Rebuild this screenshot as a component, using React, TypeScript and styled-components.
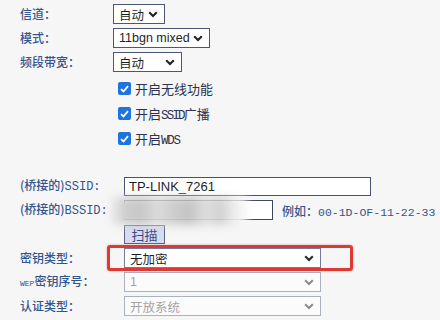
import React from 'react';
import styled, { createGlobalStyle } from 'styled-components';

const GlobalStyle = createGlobalStyle`
  html, body {
    margin: 0;
    padding: 0;
    background: #f6f6f6;
  }
  body {
    width: 440px;
    height: 320px;
    overflow: hidden;
    font-family: "Noto Sans CJK SC", sans-serif;
  }
`;

const Page = styled.div`
  display: flex;
  flex-direction: column;
  padding: 2px 0 0 20px;
`;

const Section = styled.div<{ top?: number }>`
  display: flex;
  flex-direction: column;
  margin-top: ${props => props.top || 0}px;
`;

const Row = styled.div<{ height?: number; indent?: number }>`
  display: flex;
  align-items: center;
  height: ${props => props.height || 24}px;
  padding-left: ${props => props.indent || 0}px;
`;

const Label = styled.div<{ width: number }>`
  flex: none;
  width: ${props => props.width}px;
  font-size: 12px;
  font-weight: 500;
  line-height: 16px;
  color: #32558f;
  white-space: nowrap;
`;

const Latin = styled.span<{ size?: number; squeeze?: number }>`
  font-family: "Liberation Mono", monospace;
  font-size: ${props => props.size || 12}px;
  letter-spacing: ${props => -(props.squeeze || 0)}px;
`;

const Field = styled.div`
  position: relative;
  display: flex;
  align-items: center;
`;

const Select = styled.div<{ width: number; disabled?: boolean; tone?: 'dark' | 'soft' }>`
  box-sizing: border-box;
  display: flex;
  align-items: center;
  justify-content: space-between;
  width: ${props => props.width}px;
  height: 20px;
  padding: 0 6px 0 5px;
  background: ${props => (props.disabled ? '#fbfbfb' : '#ffffff')};
  border: 1px solid
    ${props =>
      props.disabled ? '#aab1c3' : props.tone === 'soft' ? '#747c95' : '#4d5677'};
  font-family: "Liberation Sans", "Noto Sans CJK SC", sans-serif;
  font-size: 12.5px;
  color: ${props => (props.disabled ? '#a4a4a4' : '#1e1e28')};
  white-space: nowrap;
`;

const Chevron = ({ color }: { color: string }) => (
  <svg width="10" height="7" viewBox="0 0 10 7">
    <path d="M1.2 1.3 L5 5 L8.8 1.3" fill="none" stroke={color} strokeWidth="2.1" />
  </svg>
);

const TextInput = styled.div<{ width: number }>`
  box-sizing: border-box;
  display: flex;
  align-items: center;
  width: ${props => props.width}px;
  height: 19px;
  padding-left: 4px;
  background: #ffffff;
  border: 1px solid #4a5070;
  font-family: "Liberation Sans", sans-serif;
  font-size: 13px;
  color: #1c1c24;
`;

const BlurredInput = styled.div`
  position: relative;
  box-sizing: border-box;
  width: 149px;
  height: 20px;
  background: #ffffff;
  border: 1px solid #3f4560;
`;

const Smudge = styled.div`
  position: absolute;
  left: -14px;
  top: -4px;
  width: 136px;
  height: 28px;
  filter: blur(4px);
  background: linear-gradient(
    90deg,
    #ececec 0%,
    #cfcfcf 10%,
    #c6c6c6 22%,
    #dcdcdc 34%,
    #cdcdcd 46%,
    #c4c4c4 58%,
    #dfdfdf 70%,
    #d0d0d0 80%,
    #f0f0f0 92%,
    #fafafa 100%
  );
`;

const Hint = styled.div`
  margin-left: 9px;
  font-size: 12px;
  font-weight: 500;
  color: #32558f;
  white-space: nowrap;
`;

const Button = styled.div`
  box-sizing: border-box;
  display: flex;
  align-items: center;
  justify-content: center;
  width: 41px;
  height: 19px;
  background: #d8dcf0;
  border: 1px solid #5b6182;
  font-size: 13px;
  color: #364786;
`;

const Highlight = styled.div`
  position: absolute;
  left: -17px;
  top: -3px;
  right: -32px;
  bottom: -3px;
  border: 3px solid #dc3a33;
  border-radius: 3px;
  box-shadow: 0 0 2px rgba(220, 58, 51, 0.5);
  pointer-events: none;
`;

const CheckBox = styled.span`
  box-sizing: border-box;
  display: inline-flex;
  align-items: center;
  justify-content: center;
  width: 13px;
  height: 13px;
  border-radius: 2px;
  background: #1f73de;
`;

const CheckText = styled.span`
  margin-left: 4px;
  font-size: 13px;
  color: #2d3250;
  white-space: nowrap;
`;

const Check = ({ children }: { children: React.ReactNode }) => (
  <Row height={25} indent={98}>
    <CheckBox>
      <svg width="9" height="8" viewBox="0 0 9 8">
        <path d="M1 4.2 L3.5 6.5 L8 1.2" fill="none" stroke="#ffffff" strokeWidth="1.8" />
      </svg>
    </CheckBox>
    <CheckText>{children}</CheckText>
  </Row>
);

const App = () => (
  <>
    <GlobalStyle />
    <Page>
      <Section>
        <Row>
          <Label width={93}>信道：</Label>
          <Select width={52}>
            自动
            <Chevron color="#222" />
          </Select>
        </Row>
        <Row>
          <Label width={93}>模式：</Label>
          <Select width={97}>
            11bgn mixed
            <Chevron color="#222" />
          </Select>
        </Row>
        <Row>
          <Label width={93}>频段带宽：</Label>
          <Select width={69}>
            自动
            <Chevron color="#222" />
          </Select>
        </Row>
      </Section>

      <Section top={2}>
        <Check>开启无线功能</Check>
        <Check>
          开启<Latin size={12.5} squeeze={1.8}>SSID</Latin>广播
        </Check>
        <Check>
          开启<Latin size={12.5} squeeze={1.2}>WDS</Latin>
        </Check>
      </Section>

      <Section top={23}>
        <Row>
          <Label width={104}>
            (桥接的)<Latin>SSID:</Latin>
          </Label>
          <TextInput width={247}>TP-LINK_7261</TextInput>
        </Row>
        <Row>
          <Label width={104}>
            (桥接的)<Latin>BSSID:</Latin>
          </Label>
          <Field>
            <BlurredInput>
              <Smudge />
            </BlurredInput>
            <Hint>
              例如：<Latin size={11.5}>00-1D-OF-11-22-33</Latin>
            </Hint>
          </Field>
        </Row>
        <Row>
          <Label width={104} />
          <Button>扫描</Button>
        </Row>
        <Row>
          <Label width={104}>密钥类型：</Label>
          <Field>
            <Select width={197} tone="soft">
              无加密
              <Chevron color="#2a2a2a" />
            </Select>
            <Highlight />
          </Field>
        </Row>
        <Row>
          <Label width={104}>
            <Latin size={8}>WEP</Latin>密钥序号：
          </Label>
          <Select width={197} disabled>
            1
            <Chevron color="#8c8c8c" />
          </Select>
        </Row>
        <Row>
          <Label width={104}>认证类型：</Label>
          <Select width={197} disabled>
            开放系统
            <Chevron color="#8c8c8c" />
          </Select>
        </Row>
      </Section>
    </Page>
  </>
);

export default App;
